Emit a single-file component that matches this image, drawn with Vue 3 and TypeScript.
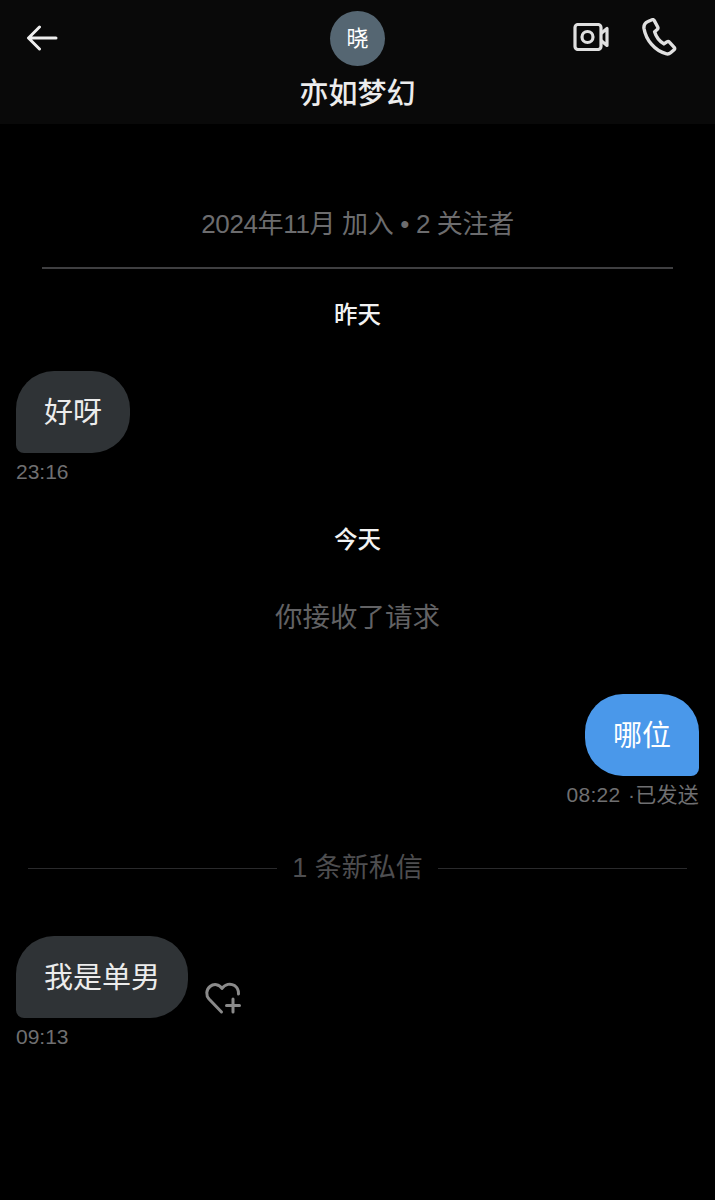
<script setup lang="ts">
interface DayGroup {
  label: string;
}

const contact = { initial: '晓', name: '亦如梦幻', meta: '2024年11月 加入 • 2 关注者' };
const yesterday: DayGroup = { label: '昨天' };
const today: DayGroup = { label: '今天' };
</script>

<template>
  <div class="screen">
    <header class="topbar">
      <button class="icon-btn back" aria-label="返回">
        <svg width="32" height="26" viewBox="0 0 32 26" fill="none" stroke="#eee" stroke-width="3" stroke-linecap="round" stroke-linejoin="round">
          <path d="M30 13H3M13.5 2 2.5 13l11 11" />
        </svg>
      </button>
      <div class="profile">
        <div class="avatar">{{ contact.initial }}</div>
        <div class="name">{{ contact.name }}</div>
      </div>
      <div class="actions">
        <svg width="36" height="28" viewBox="0 0 36 28" fill="none" stroke="#e0e0e0" stroke-width="3.2" stroke-linejoin="round">
          <rect x="2" y="1.500" width="26" height="25" rx="3" />
          <circle cx="14.500" cy="14" r="5.500" />
          <path d="M28 10.500 34 5.500v17L28 17.500" />
        </svg>
        <svg width="36" height="38" viewBox="0 0 36 38" fill="none" stroke="#e0e0e0" stroke-width="3.4" stroke-linejoin="round">
          <path d="M6 3.500 10 1.800c1-.4 1.800 0 2.300.9l3.400 6.300c.5 1 .3 1.800-.5 2.500l-2.600 2.200c1.500 5 5 9.500 9.300 12.200l3-2c.9-.6 1.800-.5 2.500.3l4.800 5.200c.7.8.7 1.700-.1 2.400l-3.500 3c-1.300 1.100-3 1.500-4.700.9C12.500 32.500 4 22 2 10.500 1.600 7.500 3 4.800 6 3.500Z" />
        </svg>
      </div>
    </header>

    <main class="thread">
      <p class="meta">{{ contact.meta }}</p>
      <div class="rule"></div>
      <div class="day">{{ yesterday.label }}</div>

      <div class="msg incoming first">
        <div class="bubble">好呀</div>
        <div class="time">23:16</div>
      </div>

      <div class="day today">{{ today.label }}</div>
      <p class="notice">你接收了请求</p>

      <div class="msg outgoing">
        <div class="bubble">哪位</div>
        <div class="time sent">08:22 ·已发送</div>
      </div>

      <div class="new-divider">
        <span class="line"></span>
        <span class="new-label">1 条新私信</span>
        <span class="line"></span>
      </div>

      <div class="msg incoming">
        <div class="bubble-row">
          <div class="bubble">我是单男</div>
          <svg class="react" width="37" height="33" viewBox="0 0 37 33" fill="none" stroke="#8a8a8a" stroke-width="3" stroke-linecap="round" stroke-linejoin="round">
            <path d="M16.500 30 4 17C.8 13.500 1 7.800 5 4.500 9 1.300 14.200 2.200 17 6.500 20 2 25.500 1 29.500 3.600c2.800 1.900 4.200 4.800 4 8.400" />
            <path d="M28 17v13M21.500 23.500h13" />
          </svg>
        </div>
        <div class="time">09:13</div>
      </div>
    </main>
  </div>
</template>

<style>
html,
body {
  margin: 0;
  background: #000;
}
</style>

<style scoped>
.screen {
  width: 715px;
  height: 1200px;
  overflow: hidden;
  background: #000;
  font-family: 'Liberation Sans', 'Noto Sans CJK SC', sans-serif;
}

.topbar {
  height: 124px;
  box-sizing: border-box;
  padding-top: 11px;
  background: #090909;
  display: grid;
  grid-template-columns: 1fr auto 1fr;
  align-items: start;
}

.icon-btn {
  padding: 0;
  border: 0;
  background: none;
  justify-self: start;
}

.back {
  margin: 14px 0 0 26px;
  height: 26px;
  line-height: 0;
}

.profile {
  display: flex;
  flex-direction: column;
  align-items: center;
}

.avatar {
  width: 55px;
  height: 55px;
  border-radius: 50%;
  background: #556672;
  color: #fff;
  font-size: 22px;
  line-height: 55px;
  text-align: center;
}

.name {
  margin-top: 8px;
  font-size: 29px;
  line-height: 40px;
  font-weight: 500;
  color: #ececec;
}

.actions {
  justify-self: end;
  display: flex;
  align-items: center;
  gap: 33px;
  margin: 7px 37px 0 0;
}

.thread {
  padding: 0 16px;
  display: flex;
  flex-direction: column;
}

.meta {
  margin: 82px 0 0;
  font-size: 26px;
  line-height: 36px;
  letter-spacing: -0.35px;
  color: #6c6c6e;
  text-align: center;
}

.rule {
  height: 2px;
  margin: 25px 26px 0;
  background: #3f3f41;
}

.day {
  margin-top: 30px;
  font-size: 23.500px;
  line-height: 32px;
  font-weight: 500;
  color: #f2f2f2;
  text-align: center;
}

.day.today {
  margin-top: 39px;
}

.msg {
  display: flex;
  flex-direction: column;
}

.msg.first {
  margin-top: 40px;
}

.incoming {
  align-items: flex-start;
}

.outgoing {
  align-items: flex-end;
  margin-top: 57px;
}

.bubble {
  height: 82px;
  box-sizing: border-box;
  padding: 2px 28px 0;
  font-size: 29px;
  line-height: 80px;
  color: #ececec;
  background: #2f3336;
  border-radius: 38px 38px 38px 8px;
}

.outgoing .bubble {
  color: #fff;
  background: #4a98ea;
  border-radius: 38px 38px 8px 38px;
}

.bubble-row {
  display: flex;
  align-items: flex-end;
  gap: 17px;
}

.react {
  margin-bottom: 3px;
}

.time {
  margin-top: 6px;
  font-size: 21px;
  line-height: 26px;
  color: #6f6f71;
}

.time.sent {
  letter-spacing: 0.25px;
  word-spacing: 1.500px;
}

.notice {
  margin: 43px 0 0;
  font-size: 27.500px;
  line-height: 38px;
  color: #626264;
  text-align: center;
}

.new-divider {
  display: flex;
  align-items: center;
  gap: 15px;
  margin: 42px 12px 0;
  height: 36px;
}

.line {
  flex: 1;
  height: 1px;
  background: #2a2a2c;
}

.new-label {
  font-size: 27px;
  line-height: 36px;
  color: #4e4e50;
}

.new-divider + .msg {
  margin-top: 50px;
}
</style>
